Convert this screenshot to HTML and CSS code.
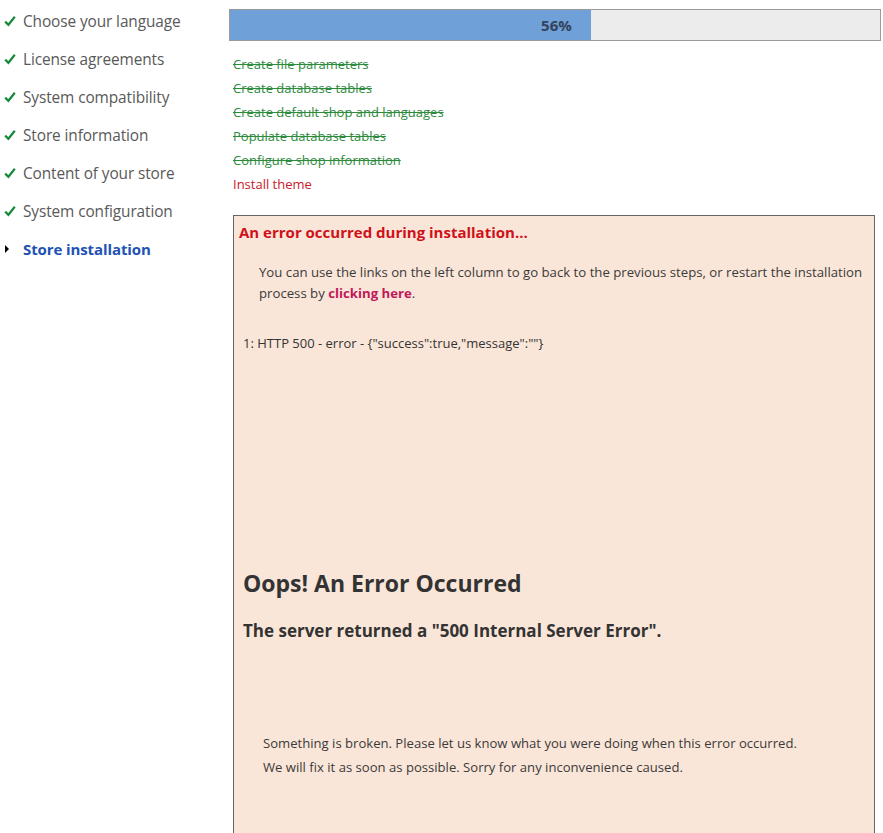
FILE: index.html
```html
<!DOCTYPE html>
<html>
<head>
<meta charset="utf-8">
<link rel="stylesheet" href="styles.css">
</head>
<body>
<div class="page">
  <ul class="steps">
    <li class="done"><svg class="check" viewBox="0 0 12 12"><path d="M1.2 6.6 L4.4 9.8 L10.8 1.8" fill="none" stroke="#17893a" stroke-width="2.2"/></svg>Choose your language</li>
    <li class="done"><svg class="check" viewBox="0 0 12 12"><path d="M1.2 6.6 L4.4 9.8 L10.8 1.8" fill="none" stroke="#17893a" stroke-width="2.2"/></svg>License agreements</li>
    <li class="done"><svg class="check" viewBox="0 0 12 12"><path d="M1.2 6.6 L4.4 9.8 L10.8 1.8" fill="none" stroke="#17893a" stroke-width="2.2"/></svg>System compatibility</li>
    <li class="done"><svg class="check" viewBox="0 0 12 12"><path d="M1.2 6.6 L4.4 9.8 L10.8 1.8" fill="none" stroke="#17893a" stroke-width="2.2"/></svg>Store information</li>
    <li class="done"><svg class="check" viewBox="0 0 12 12"><path d="M1.2 6.6 L4.4 9.8 L10.8 1.8" fill="none" stroke="#17893a" stroke-width="2.2"/></svg>Content of your store</li>
    <li class="done"><svg class="check" viewBox="0 0 12 12"><path d="M1.2 6.6 L4.4 9.8 L10.8 1.8" fill="none" stroke="#17893a" stroke-width="2.2"/></svg>System configuration</li>
    <li class="active"><span class="arrow"></span>Store installation</li>
  </ul>
  <div class="main">
    <div class="progress">
      <div class="fill" style="width:55.5%"><span>56%</span></div>
    </div>
    <ul class="tasks">
      <li class="ok">Create file parameters</li>
      <li class="ok">Create database tables</li>
      <li class="ok">Create default shop and languages</li>
      <li class="ok">Populate database tables</li>
      <li class="ok">Configure shop information</li>
      <li class="fail">Install theme</li>
    </ul>
    <div class="errbox">
      <h3 class="errtitle">An error occurred during installation...</h3>
      <p class="errtext">You can use the links on the left column to go back to the previous steps, or restart the installation process by <a href="#">clicking here</a>.</p>
      <p class="errline">1: HTTP 500 - error - {"success":true,"message":""}</p>
      <h1 class="oops">Oops! An Error Occurred</h1>
      <h2 class="server">The server returned a "500 Internal Server Error".</h2>
      <div class="sorry">
        <p>Something is broken. Please let us know what you were doing when this error occurred.</p>
        <p>We will fix it as soon as possible. Sorry for any inconvenience caused.</p>
      </div>
    </div>
  </div>
</div>
</body>
</html>
```
FILE: styles.css
```css
html, body {
  margin: 0;
  padding: 0;
  background: #fff;
  font-family: "Open Sans", "Noto Sans", sans-serif;
  color: #333;
}
.page {
  display: flex;
  align-items: flex-start;
  height: 833px;
  overflow: hidden;
}
.steps {
  list-style: none;
  margin: 0;
  padding: 11px 0 0 4px;
  width: 225px;
  flex: none;
}
.steps li {
  height: 38px;
  line-height: 22px;
  font-size: 15.4px;
  color: #595959;
  display: flex;
  align-items: flex-start;
  letter-spacing: -0.1px;
}
.check {
  width: 12px;
  height: 12px;
  margin: 4px 7px 0 0;
  flex: none;
}
.steps li.active {
  color: #2151b5;
  font-weight: bold;
  font-size: 15px;
  line-height: 20px;
}
.arrow {
  width: 0;
  height: 0;
  border-left: 4px solid #000;
  border-top: 4px solid transparent;
  border-bottom: 4px solid transparent;
  margin: 6px 14px 0 1px;
  flex: none;
}
.main {
  flex: none;
  width: 652px;
  padding-top: 9px;
}
.progress {
  height: 30px;
  border: 1px solid #9a9a9a;
  background: #ececec;
  display: flex;
}
.fill {
  background: #6fa0d8;
  display: flex;
  justify-content: flex-end;
  align-items: center;
  padding-right: 19px;
  box-sizing: border-box;
}
.fill span {
  font-weight: bold;
  font-size: 15px;
  color: #34435a;
}
.tasks {
  list-style: none;
  margin: 0;
  padding: 11px 0 0 4px;
}
.tasks li {
  height: 24px;
  line-height: 24px;
  font-size: 13px;
}
.tasks li.ok {
  color: #2e8b3e;
  text-decoration: line-through;
}
.tasks li.fail {
  color: #c8202c;
}
.errbox {
  margin: 19px 6px 0 4px;
  border: 1px solid #666;
  border-bottom: none;
  background: #fae6d8;
  height: 640px;
  padding: 0 10px 0 5px;
}
.errtitle {
  margin: 0;
  padding-top: 5px;
  font-size: 15px;
  line-height: 22px;
  color: #d0101a;
  font-weight: bold;
}
.errtext {
  margin: 19px 0 0 20px;
  font-size: 13.2px;
  line-height: 21px;
  color: #3a3a3a;
}
.errtext a {
  color: #c0185a;
  font-weight: bold;
  text-decoration: none;
}
.errline {
  margin: 30px 0 0 4px;
  font-size: 13px;
  line-height: 18px;
  color: #333;
}
.oops {
  margin: 216px 0 0 4px;
  font-size: 23px;
  line-height: 30px;
  color: #333;
  font-weight: bold;
}
.server {
  margin: 21px 0 0 4px;
  font-size: 17px;
  line-height: 24px;
  color: #333;
  font-weight: bold;
}
.sorry {
  margin: 88px 0 0 24px;
}
.sorry p {
  margin: 0;
  font-size: 13.1px;
  line-height: 24px;
  color: #3a3a3a;
}
```
